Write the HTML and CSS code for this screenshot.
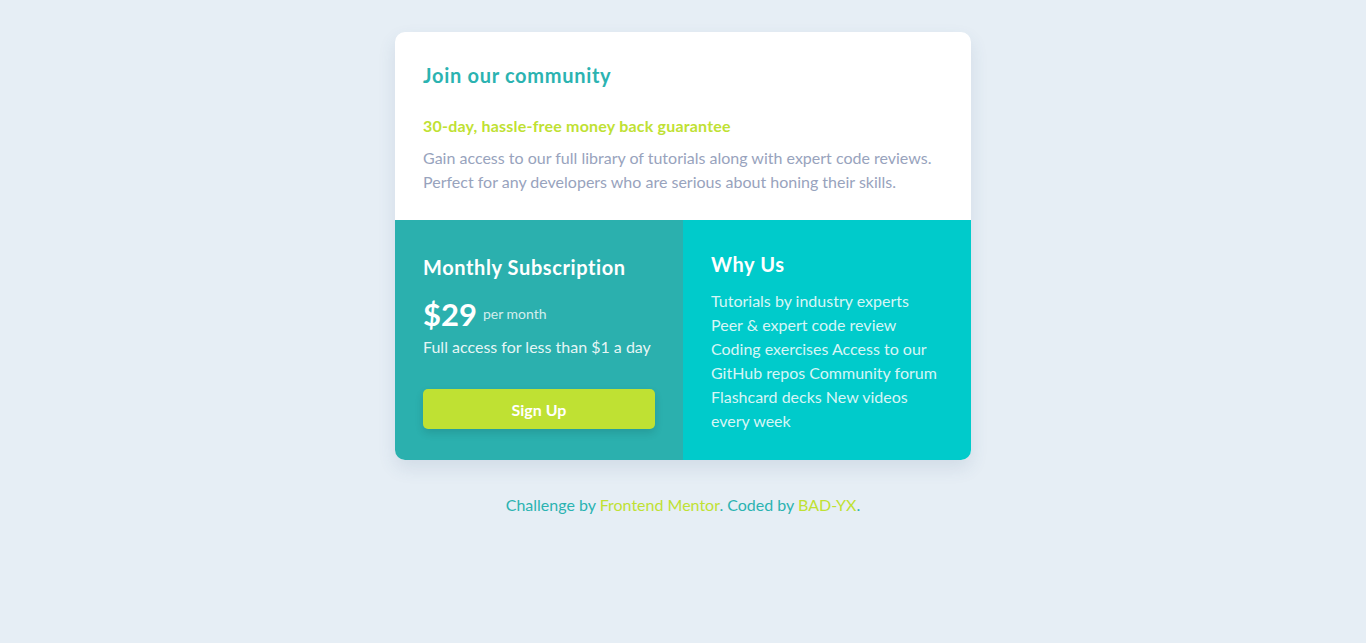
FILE: index.html
```html
<!DOCTYPE html>
<html lang="en">
<head>
<meta charset="utf-8">
<title>Join our community</title>
<link rel="stylesheet" href="styles.css">
</head>
<body>
<main class="page">
  <section class="card">
    <div class="intro">
      <h1 class="title">Join our community</h1>
      <p class="guarantee">30-day, hassle-free money back guarantee</p>
      <p class="desc">Gain access to our full library of tutorials along with expert code reviews.<br>Perfect for any developers who are serious about honing their skills.</p>
    </div>
    <div class="bottom">
      <div class="sub">
        <h2 class="sub-title">Monthly Subscription</h2>
        <div class="price-row"><span class="price">$29</span><span class="per">per month</span></div>
        <p class="full">Full access for less than $1 a day</p>
        <button class="signup">Sign Up</button>
      </div>
      <div class="why">
        <h2 class="why-title">Why Us</h2>
        <p class="why-list">Tutorials by industry experts<br>Peer &amp; expert code review<br>Coding exercises Access to our GitHub repos Community forum Flashcard decks New videos every week</p>
      </div>
    </div>
  </section>
  <p class="attribution">Challenge by <a href="#">Frontend Mentor</a>. Coded by <a href="#">BAD-YX</a>.</p>
</main>
</body>
</html>
```

FILE: styles.css
```css
* { box-sizing: border-box; }
body {
  margin: 0;
  background: #e6eef5;
  font-family: Lato, "Noto Sans", sans-serif;
  font-size: 16px;
}
.page {
  display: flex;
  flex-direction: column;
  align-items: center;
  padding-top: 32px;
}
.card {
  width: 576px;
  background: #fff;
  border-radius: 10px;
  overflow: hidden;
  box-shadow: 0 8px 18px rgba(60, 90, 130, 0.12);
}
.intro {
  padding: 31px 28px 26px;
}
.title {
  margin: 0;
  font-size: 20px;
  line-height: 24px;
  font-weight: 700;
  letter-spacing: 0.7px;
  color: #2bb3b1;
}
.guarantee {
  margin: 27px 0 0;
  font-size: 16px;
  line-height: 24px;
  font-weight: 700;
  letter-spacing: 0.2px;
  color: #bfe133;
}
.desc {
  margin: 8px 0 0;
  line-height: 24px;
  color: #98a3bd;
}
.bottom {
  display: grid;
  grid-template-columns: 288px 288px;
}
.sub {
  background: #2bb0ae;
  padding: 35px 28px 31px;
  color: #fff;
  display: flex;
  flex-direction: column;
}
.sub-title, .why-title {
  margin: 0;
  font-size: 20px;
  line-height: 24px;
  font-weight: 700;
  letter-spacing: 0.6px;
  color: #fff;
}
.price-row {
  margin-top: 17px;
  display: flex;
  align-items: center;
  gap: 6px;
  height: 36px;
}
.price {
  font-size: 31px;
  line-height: 36px;
  font-weight: 700;
}
.per {
  font-size: 14px;
  color: rgba(255, 255, 255, 0.8);
  margin-top: -2px;
}
.full {
  margin: 3px 0 0;
  line-height: 24px;
  color: rgba(255, 255, 255, 0.9);
}
.signup {
  margin-top: 30px;
  height: 40px;
  width: 100%;
  border: 0;
  border-radius: 5px;
  background: #bfe133;
  color: #fff;
  font-family: inherit;
  font-size: 16px;
  font-weight: 700;
  box-shadow: 0 4px 8px rgba(0, 0, 0, 0.12);
  cursor: pointer;
}
.why {
  background: #00cbcb;
  padding: 32px 28px 27px;
  color: rgba(255, 255, 255, 0.85);
}
.why-list {
  margin: 13px 0 0;
  line-height: 24px;
}
.attribution {
  margin: 33px 0 0;
  line-height: 24px;
  color: #2bb3b1;
}
.attribution a {
  color: #bfe133;
  text-decoration: none;
}
```
